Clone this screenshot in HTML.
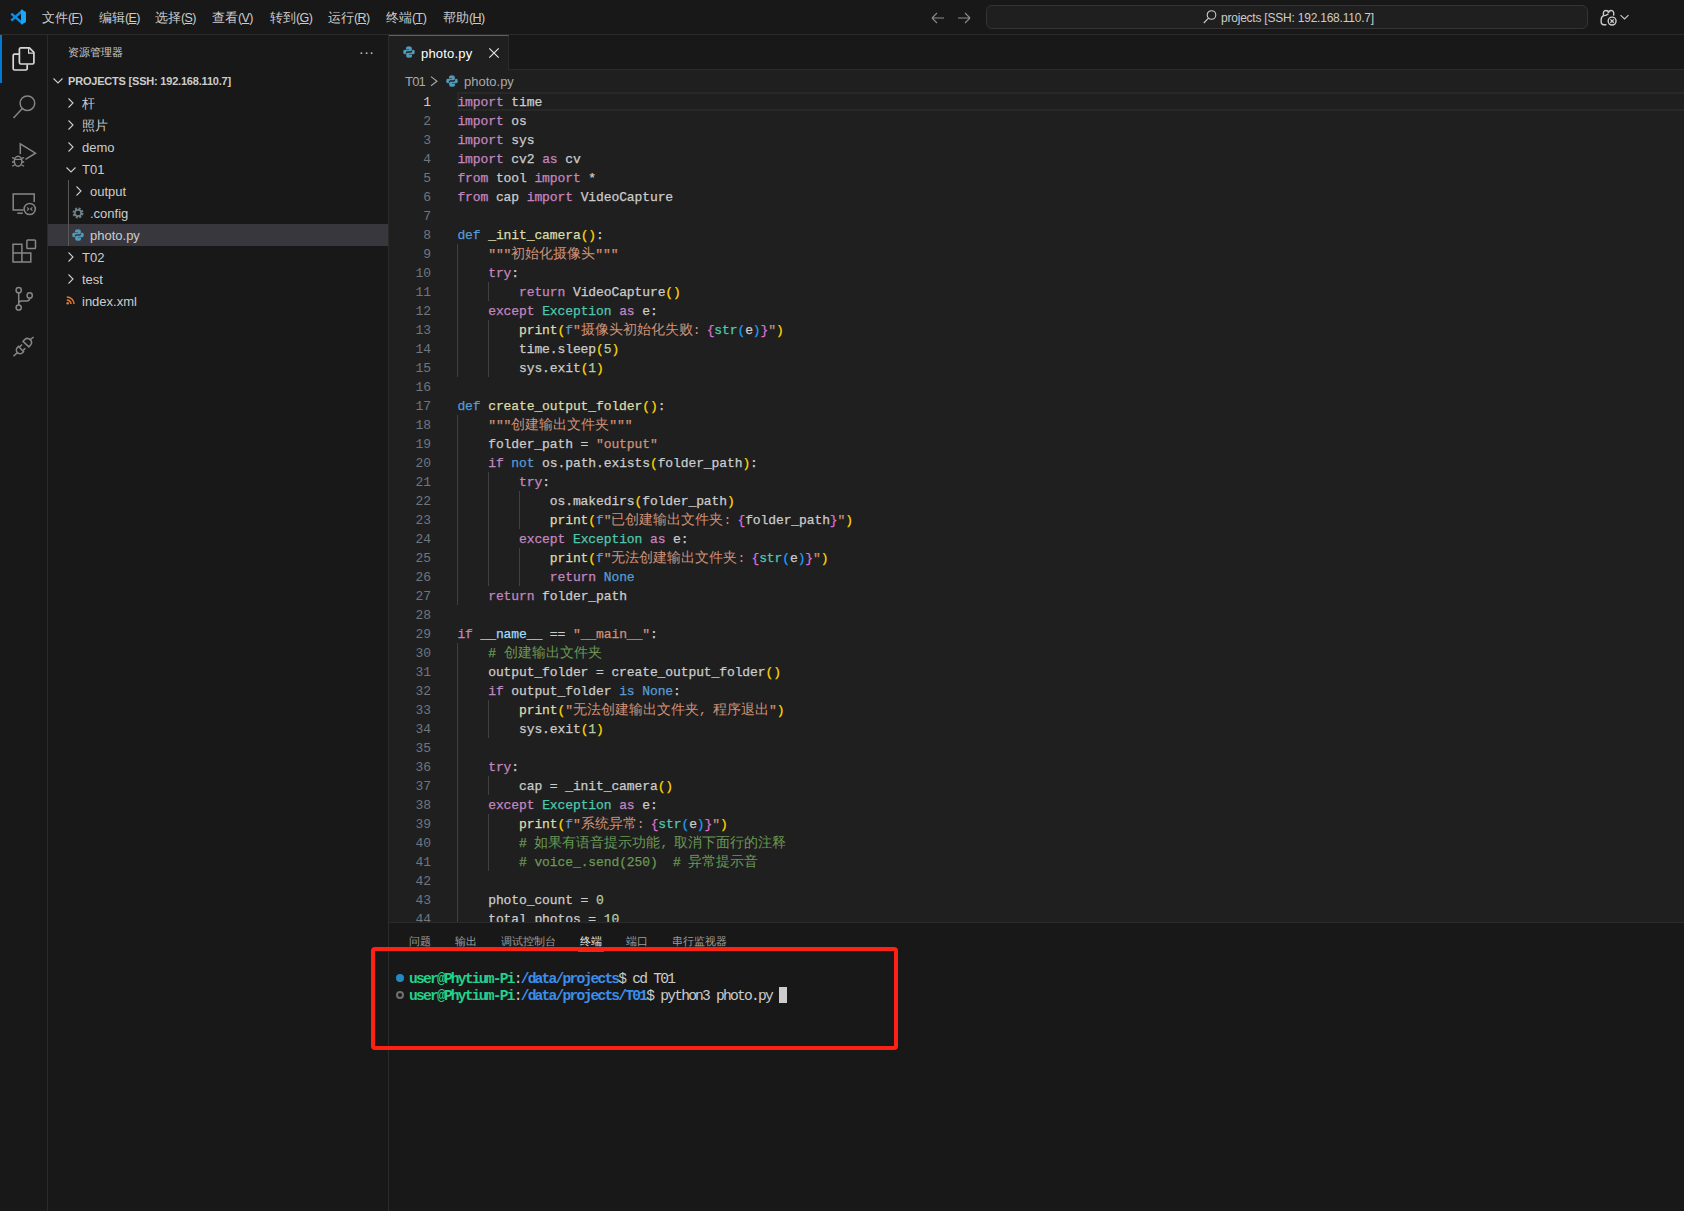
<!DOCTYPE html>
<html><head><meta charset="utf-8">
<style>
*{margin:0;padding:0;box-sizing:border-box}
html,body{width:1684px;height:1211px;overflow:hidden;background:#181818}
body{position:relative;font-family:"Liberation Sans",sans-serif;color:#cccccc}
.abs{position:absolute}
svg{position:absolute;overflow:visible}
/* title bar */
#title{left:0;top:0;width:1684px;height:35px;background:#181818;border-bottom:1px solid #2b2b2b}
.menu{position:absolute;top:9px;font-size:13px;line-height:17px;color:#cccccc;white-space:nowrap}
.mn{font-size:12.5px;letter-spacing:-0.6px}.mn u{text-decoration:underline;text-underline-offset:1px;text-decoration-thickness:1px}
#cc{left:986px;top:5px;width:602px;height:24px;background:#1f1f1f;border:1px solid #343434;border-radius:6px}
#cctext{left:1221px;top:10px;font-size:12px;line-height:16px;color:#cccccc;white-space:nowrap;letter-spacing:-0.22px}
/* activity bar */
#act{left:0;top:35px;width:48px;height:1176px;background:#181818;border-right:1px solid #2b2b2b}
#actind{left:0;top:35px;width:2px;height:48px;background:#0078d4}
/* sidebar */
#side{left:48px;top:35px;width:341px;height:1176px;background:#181818;border-right:1px solid #2b2b2b}
.st{position:absolute;margin-top:1px;font-size:13px;line-height:22px;color:#cccccc;white-space:nowrap}
.chev{position:absolute}
#sel{left:48px;top:224px;width:340px;height:22px;background:#37373d}
/* editor */
#editor{left:389px;top:35px;width:1295px;height:887px;background:#1f1f1f}
#tabs{left:389px;top:35px;width:1295px;height:35px;background:#181818;border-bottom:1px solid #2b2b2b}
#tab{left:389px;top:35px;width:120px;height:35px;background:#1f1f1f;border-top:1px solid #0078d4;border-right:1px solid #2b2b2b}
.ln{position:absolute;left:389px;width:42px;text-align:right;height:19px;line-height:19px;font-family:"Liberation Mono",monospace;font-size:13px;color:#6e7681;letter-spacing:-0.1px}
.cl{position:absolute;left:457.4px;height:19px;line-height:19px;font-family:"Liberation Mono",monospace;font-size:13px;letter-spacing:-0.1px;white-space:pre;color:#cccccc;-webkit-text-stroke:0.25px currentColor}
.cj{display:inline-block;font-style:normal;letter-spacing:0;-webkit-text-stroke:0;font-size:13.5px;overflow:hidden;white-space:nowrap;vertical-align:top;text-align:left}
.ig{position:absolute;width:1px;background:#404040}
.k{color:#c586c0}.b{color:#569cd6}.f{color:#dcdcaa}.s{color:#ce9178}.t{color:#4ec9b0}.n{color:#b5cea8}.c{color:#6a9955}.m{color:#9cdcfe}.y{color:#ffd700}.p{color:#da70d6}.q{color:#179fff}.w{color:#cccccc}
#curline{left:457px;top:92px;width:1227px;height:19px;border:2px solid #282828;border-right:none}
/* panel */
#panel{left:389px;top:922px;width:1295px;height:289px;background:#181818;border-top:1px solid #2b2b2b}
.pt{position:absolute;top:933px;font-size:11px;line-height:16px;color:#9d9d9d;white-space:nowrap}
.term{position:absolute;left:409px;height:17px;line-height:17px;font-family:"Liberation Mono",monospace;font-size:14.6px;letter-spacing:-1.78px;white-space:pre;color:#cccccc}
.tg{color:#23d18b;font-weight:bold}.tb{color:#3b8eea;font-weight:bold}
#redbox{left:371px;top:947px;width:527px;height:103px;border:4px solid #ff2114;border-radius:4px}
</style></head><body>

<!-- TITLE BAR -->
<div id="title" class="abs"></div>
<svg style="left:10px;top:9px" width="16" height="16" viewBox="0 0 16 16">
  <path d="M13 1.2 L1.3 11.6" stroke="#0a8fe4" stroke-width="2.5"/>
  <path d="M1.3 4.6 L13 14.8" stroke="#0a8fe4" stroke-width="2.5"/>
  <path d="M11 0.6 L15.2 2.5 Q16 2.9 16 3.8 V12.2 Q16 13.1 15.2 13.5 L11 15.4 Z" fill="#1aa6f4"/>
</svg>
<div class="menu" style="left:42px">文件<span class="mn">(<u>F</u>)</span></div>
<div class="menu" style="left:99px">编辑<span class="mn">(<u>E</u>)</span></div>
<div class="menu" style="left:155px">选择<span class="mn">(<u>S</u>)</span></div>
<div class="menu" style="left:212px">查看<span class="mn">(<u>V</u>)</span></div>
<div class="menu" style="left:270px">转到<span class="mn">(<u>G</u>)</span></div>
<div class="menu" style="left:328px">运行<span class="mn">(<u>R</u>)</span></div>
<div class="menu" style="left:386px">终端<span class="mn">(<u>T</u>)</span></div>
<div class="menu" style="left:443px">帮助<span class="mn">(<u>H</u>)</span></div>
<!-- nav arrows -->
<svg style="left:930px;top:10px" width="16" height="16" viewBox="0 0 16 16" fill="none" stroke="#8b8b8b" stroke-width="1.1">
  <path d="M2 8 H14 M2 8 L7 3 M2 8 L7 13"/>
</svg>
<svg style="left:956px;top:10px" width="16" height="16" viewBox="0 0 16 16" fill="none" stroke="#8b8b8b" stroke-width="1.1">
  <path d="M14 8 H2 M14 8 L9 3 M14 8 L9 13"/>
</svg>
<div id="cc" class="abs"></div>
<svg style="left:1202px;top:9px" width="16" height="16" viewBox="0 0 16 16" fill="none" stroke="#cccccc" stroke-width="1.1">
  <circle cx="9.5" cy="6" r="4.3"/><path d="M6.5 9.2 L1.8 14"/>
</svg>
<div id="cctext" class="abs">projects [SSH: 192.168.110.7]</div>
<!-- accounts icon -->
<svg style="left:1600px;top:9px" width="17" height="17" viewBox="0 0 16 16" fill="none" stroke="#cccccc" stroke-width="1.3">
  <path d="M3.4 6.2 Q2.4 1.4 5.6 1.4 Q8 1.4 8 3.8 Q8 1.4 10.4 1.4 Q13.6 1.4 12.8 6.2"/>
  <path d="M3.4 6.2 Q5.6 6.6 8 4.4 M3.4 6.2 Q1.1 7.2 1.1 10 V12.4 Q1.2 14.6 3.6 14.8 H6"/>
  <circle cx="11.4" cy="11.4" r="3.7"/><path d="M9.8 9.8 L13 13 M13 9.8 L9.8 13" stroke-width="1.2"/>
</svg>
<svg style="left:1619px;top:12px" width="11" height="10" viewBox="0 0 11 10" fill="none" stroke="#cccccc" stroke-width="1.1">
  <path d="M1.5 3.2 L5.5 7 L9.5 3.2"/>
</svg>

<!-- ACTIVITY BAR -->
<div id="act" class="abs"></div>
<div id="actind" class="abs"></div>
<!-- files -->
<svg style="left:12px;top:47px" width="24" height="24" viewBox="0 0 24 24" fill="none" stroke="#d7d7d7" stroke-width="1.7">
  <path d="M7.3 7.2 H2.6 Q1.2 7.2 1.2 8.6 V21.6 Q1.2 23 2.6 23 H13.8 Q15.2 23 15.2 21.6 V17.4"/>
  <path d="M8.8 0.9 H17.4 L21.9 5.4 V15.6 Q21.9 17 20.5 17 H8.8 Q7.4 17 7.4 15.6 V2.3 Q7.4 0.9 8.8 0.9 Z"/><path d="M16.6 1.2 V6.2 H21.6" stroke-width="1.2"/>
</svg>
<!-- search -->
<svg style="left:12px;top:95px" width="24" height="24" viewBox="0 0 24 24" fill="none" stroke="#868686" stroke-width="1.5">
  <circle cx="15.4" cy="8.2" r="7.3"/><path d="M10.3 13.6 L1.5 23"/>
</svg>
<!-- run & debug -->
<svg style="left:12px;top:143px" width="24" height="24" viewBox="0 0 24 24" fill="none" stroke="#868686" stroke-width="1.5">
  <path d="M8.3 11 V0.8 L23.5 10.2 L13.5 16.3"/>
  <ellipse cx="6.1" cy="18.3" rx="3.8" ry="5"/>
  <path d="M2.4 16.3 H9.8 M0 14.6 L2.4 15.4 M12.2 14.6 L9.8 15.4 M0 19 H2.3 M9.9 19 H12.2 M0.2 23.2 L2.8 21.8 M12 23.2 L9.4 21.8" stroke-width="1.3"/>
</svg>
<!-- remote explorer -->
<svg style="left:12px;top:191px" width="24" height="24" viewBox="0 0 24 24" fill="none" stroke="#868686" stroke-width="1.5">
  <path d="M11.5 19 H1.2 V3 H22.2 V11"/>
  <path d="M5.3 22.2 H10.8"/>
  <circle cx="17.7" cy="18" r="5.6"/>
  <path d="M15 16.3 L16.8 18 L15 19.7 M20.4 16.3 L18.6 18 L20.4 19.7" stroke-width="1.1"/>
</svg>
<!-- extensions -->
<svg style="left:12px;top:239px" width="24" height="24" viewBox="0 0 24 24" fill="none" stroke="#868686" stroke-width="1.5">
  <path d="M1 5.2 H9.9 V14.1 H18.8 V23 H1 Z M1 14.1 H9.9 V23"/>
  <rect x="14.9" y="1" width="8.6" height="8.6" rx="0.8"/>
</svg>
<!-- source control -->
<svg style="left:12px;top:287px" width="24" height="24" viewBox="0 0 24 24" fill="none" stroke="#868686" stroke-width="1.5">
  <circle cx="6.7" cy="3.2" r="2.6"/><circle cx="6.7" cy="20.5" r="2.6"/><circle cx="17.7" cy="8.4" r="2.6"/>
  <path d="M6.7 5.8 V17.9 M17.7 11 Q17.7 14 14.7 14 H9.5 Q6.7 14 6.7 16.5"/>
</svg>
<!-- plug -->
<svg style="left:12px;top:335px" width="24" height="24" viewBox="0 0 24 24" fill="none" stroke="#868686" stroke-width="1.5">
  <path d="M11 6.4 L16.9 11.9 L18.6 10.1 A4.05 4.05 0 0 0 12.7 4.6 Z M18.1 4.7 L21.7 2"/>
  <path d="M6.6 11.4 L11.6 16.7 L10.5 17.7 A3.6 3.6 0 0 1 5.5 12.4 Z M7.6 11.9 L10 9.4 M11.3 15.1 L13.4 13.2 M5.3 17.6 L1.5 21.2"/>
</svg>

<!-- SIDEBAR -->
<div id="side" class="abs"></div>
<div class="abs" style="left:68px;top:44px;font-size:11px;line-height:16px;color:#cccccc">资源管理器</div>
<div class="abs" style="left:359px;top:44px;font-size:14px;line-height:16px;color:#cccccc;letter-spacing:0.5px">···</div>
<svg style="left:52px;top:75px" width="12" height="12" viewBox="0 0 12 12" fill="none" stroke="#cccccc" stroke-width="1.1"><path d="M1.5 3.5 L6 8 L10.5 3.5"/></svg>
<div class="abs" style="left:68px;top:73px;font-size:11px;line-height:16px;font-weight:bold;color:#cccccc;white-space:nowrap;letter-spacing:-0.2px">PROJECTS [SSH: 192.168.110.7]</div>
<div id="sel" class="abs"></div>
<!-- tree indent guide -->
<div class="abs" style="left:68px;top:180px;width:1px;height:66px;background:#585858"></div>
<svg style="left:67px;top:97px" width="8" height="12" viewBox="0 0 8 12" fill="none" stroke="#cccccc" stroke-width="1.1"><path d="M1.5 1.5 L6 6 L1.5 10.5"/></svg>
<div class="st" style="left:82px;top:92px">杆</div>
<svg style="left:67px;top:119px" width="8" height="12" viewBox="0 0 8 12" fill="none" stroke="#cccccc" stroke-width="1.1"><path d="M1.5 1.5 L6 6 L1.5 10.5"/></svg>
<div class="st" style="left:82px;top:114px">照片</div>
<svg style="left:67px;top:141px" width="8" height="12" viewBox="0 0 8 12" fill="none" stroke="#cccccc" stroke-width="1.1"><path d="M1.5 1.5 L6 6 L1.5 10.5"/></svg>
<div class="st" style="left:82px;top:136px">demo</div>
<svg style="left:65px;top:166px" width="12" height="8" viewBox="0 0 12 8" fill="none" stroke="#cccccc" stroke-width="1.1"><path d="M1.5 1.5 L6 6 L10.5 1.5"/></svg>
<div class="st" style="left:82px;top:158px">T01</div>
<svg style="left:75px;top:185px" width="8" height="12" viewBox="0 0 8 12" fill="none" stroke="#cccccc" stroke-width="1.1"><path d="M1.5 1.5 L6 6 L1.5 10.5"/></svg>
<div class="st" style="left:90px;top:180px">output</div>
<svg style="left:72px;top:207px" width="12" height="12" viewBox="0 0 12 12"><circle cx="6" cy="6" r="4.2" fill="none" stroke="#6d8086" stroke-width="2.6" stroke-dasharray="1.9 1.4"/><circle cx="6" cy="6" r="3.2" fill="none" stroke="#6d8086" stroke-width="1.8"/></svg>
<div class="st" style="left:90px;top:202px">.config</div>
<svg style="left:72px;top:229px" width="12" height="12" viewBox="0 0 12 12"><path d="M5.9 0.3 Q3 0.3 3 1.8 V3.2 H6.1 V3.7 H1.8 Q0.2 3.7 0.2 6 Q0.2 8.3 1.8 8.3 H2.8 V6.9 Q2.8 5.3 4.4 5.3 H7.4 Q8.8 5.3 8.8 4 V1.8 Q8.8 0.3 5.9 0.3 Z" fill="#519aba"/><path d="M6.1 11.7 Q9 11.7 9 10.2 V8.8 H5.9 V8.3 H10.2 Q11.8 8.3 11.8 6 Q11.8 3.7 10.2 3.7 H9.2 V5.1 Q9.2 6.7 7.6 6.7 H4.6 Q3.2 6.7 3.2 8 V10.2 Q3.2 11.7 6.1 11.7 Z" fill="#519aba"/></svg>
<div class="st" style="left:90px;top:224px">photo.py</div>
<svg style="left:67px;top:251px" width="8" height="12" viewBox="0 0 8 12" fill="none" stroke="#cccccc" stroke-width="1.1"><path d="M1.5 1.5 L6 6 L1.5 10.5"/></svg>
<div class="st" style="left:82px;top:246px">T02</div>
<svg style="left:67px;top:273px" width="8" height="12" viewBox="0 0 8 12" fill="none" stroke="#cccccc" stroke-width="1.1"><path d="M1.5 1.5 L6 6 L1.5 10.5"/></svg>
<div class="st" style="left:82px;top:268px">test</div>
<svg style="left:66px;top:296px" width="10" height="9" viewBox="0 0 10 9" fill="none" stroke="#e37933" stroke-width="1.5"><circle cx="1.7" cy="7.3" r="1.3" fill="#e37933" stroke="none"/><path d="M0.8 3.9 A4.2 4.2 0 0 1 5 8.1 M0.8 0.9 A7.2 7.2 0 0 1 8 8.1"/></svg>
<div class="st" style="left:82px;top:290px">index.xml</div>

<!-- EDITOR -->
<div id="editor" class="abs"></div>
<div id="tabs" class="abs"></div>
<div id="tab" class="abs"></div>
<svg style="left:403px;top:46px" width="12" height="12" viewBox="0 0 12 12">
  <path d="M5.9 0.3 Q3 0.3 3 1.8 V3.2 H6.1 V3.7 H1.8 Q0.2 3.7 0.2 6 Q0.2 8.3 1.8 8.3 H2.8 V6.9 Q2.8 5.3 4.4 5.3 H7.4 Q8.8 5.3 8.8 4 V1.8 Q8.8 0.3 5.9 0.3 Z" fill="#519aba"/>
  <path d="M6.1 11.7 Q9 11.7 9 10.2 V8.8 H5.9 V8.3 H10.2 Q11.8 8.3 11.8 6 Q11.8 3.7 10.2 3.7 H9.2 V5.1 Q9.2 6.7 7.6 6.7 H4.6 Q3.2 6.7 3.2 8 V10.2 Q3.2 11.7 6.1 11.7 Z" fill="#519aba"/>
</svg>
<div class="abs" style="left:421px;top:45px;font-size:13px;line-height:17px;color:#ffffff;letter-spacing:0.2px">photo.py</div>
<svg style="left:488px;top:47px" width="12" height="12" viewBox="0 0 12 12" fill="none" stroke="#e8e8e8" stroke-width="1.15"><path d="M1.3 1.3 L10.7 10.7 M10.7 1.3 L1.3 10.7"/></svg>
<!-- breadcrumbs -->
<div class="abs" style="left:405px;top:73px;font-size:13px;line-height:17px;color:#a9a9a9;letter-spacing:-0.8px">T01</div>
<svg style="left:429px;top:75px" width="10" height="12" viewBox="0 0 10 12" fill="none" stroke="#a9a9a9" stroke-width="1.1"><path d="M2 1.6 L8 6.2 L2 10.8"/></svg>
<svg style="left:446px;top:75px" width="12" height="12" viewBox="0 0 12 12">
  <path d="M5.9 0.3 Q3 0.3 3 1.8 V3.2 H6.1 V3.7 H1.8 Q0.2 3.7 0.2 6 Q0.2 8.3 1.8 8.3 H2.8 V6.9 Q2.8 5.3 4.4 5.3 H7.4 Q8.8 5.3 8.8 4 V1.8 Q8.8 0.3 5.9 0.3 Z" fill="#519aba"/>
  <path d="M6.1 11.7 Q9 11.7 9 10.2 V8.8 H5.9 V8.3 H10.2 Q11.8 8.3 11.8 6 Q11.8 3.7 10.2 3.7 H9.2 V5.1 Q9.2 6.7 7.6 6.7 H4.6 Q3.2 6.7 3.2 8 V10.2 Q3.2 11.7 6.1 11.7 Z" fill="#519aba"/>
</svg>
<div class="abs" style="left:464px;top:73px;font-size:13px;line-height:17px;color:#a9a9a9">photo.py</div>
<div id="curline" class="abs"></div>
<div class="abs" style="left:389px;top:92px;width:1295px;height:830px;overflow:hidden">
<div style="position:absolute;left:-389px;top:-92px;width:1684px;height:1211px">
<div class="ig" style="left:457.4px;top:244px;height:133px"></div>
<div class="ig" style="left:488.2px;top:282px;height:19px"></div>
<div class="ig" style="left:488.2px;top:320px;height:57px"></div>
<div class="ig" style="left:457.4px;top:415px;height:190px"></div>
<div class="ig" style="left:488.2px;top:472px;height:114px"></div>
<div class="ig" style="left:519.0px;top:491px;height:38px"></div>
<div class="ig" style="left:519.0px;top:548px;height:38px"></div>
<div class="ig" style="left:457.4px;top:643px;height:285px"></div>
<div class="ig" style="left:488.2px;top:700px;height:38px"></div>
<div class="ig" style="left:488.2px;top:776px;height:19px"></div>
<div class="ig" style="left:488.2px;top:814px;height:57px"></div>
<div class="ln" style="top:93px;color:#cccccc">1</div><div class="cl" style="top:93px"><span class="k">import</span><span class="w"> time</span></div>
<div class="ln" style="top:112px">2</div><div class="cl" style="top:112px"><span class="k">import</span><span class="w"> os</span></div>
<div class="ln" style="top:131px">3</div><div class="cl" style="top:131px"><span class="k">import</span><span class="w"> sys</span></div>
<div class="ln" style="top:150px">4</div><div class="cl" style="top:150px"><span class="k">import</span><span class="w"> cv2 </span><span class="k">as</span><span class="w"> cv</span></div>
<div class="ln" style="top:169px">5</div><div class="cl" style="top:169px"><span class="k">from</span><span class="w"> tool </span><span class="k">import</span><span class="w"> *</span></div>
<div class="ln" style="top:188px">6</div><div class="cl" style="top:188px"><span class="k">from</span><span class="w"> cap </span><span class="k">import</span><span class="w"> VideoCapture</span></div>
<div class="ln" style="top:207px">7</div><div class="cl" style="top:207px"></div>
<div class="ln" style="top:226px">8</div><div class="cl" style="top:226px"><span class="b">def</span><span class="w"> </span><span class="f">_init_camera</span><span class="y">()</span><span class="w">:</span></div>
<div class="ln" style="top:245px">9</div><div class="cl" style="top:245px"><span class="w">    </span><span class="s">&quot;&quot;&quot;<i class="cj" style="width:84px">初始化摄像头</i>&quot;&quot;&quot;</span></div>
<div class="ln" style="top:264px">10</div><div class="cl" style="top:264px"><span class="w">    </span><span class="k">try</span><span class="w">:</span></div>
<div class="ln" style="top:283px">11</div><div class="cl" style="top:283px"><span class="w">        </span><span class="k">return</span><span class="w"> VideoCapture</span><span class="y">()</span></div>
<div class="ln" style="top:302px">12</div><div class="cl" style="top:302px"><span class="w">    </span><span class="k">except</span><span class="w"> </span><span class="t">Exception</span><span class="w"> </span><span class="k">as</span><span class="w"> e:</span></div>
<div class="ln" style="top:321px">13</div><div class="cl" style="top:321px"><span class="w">        </span><span class="f">print</span><span class="y">(</span><span class="b">f</span><span class="s">&quot;<i class="cj" style="width:112px">摄像头初始化失败</i><i class="cj" style="width:14px;font-family:&quot;Liberation Mono&quot;,monospace;font-size:13px">:</i></span><span class="p">{</span><span class="t">str</span><span class="q">(</span><span class="w">e</span><span class="q">)</span><span class="p">}</span><span class="s">&quot;</span><span class="y">)</span></div>
<div class="ln" style="top:340px">14</div><div class="cl" style="top:340px"><span class="w">        time.sleep</span><span class="y">(</span><span class="n">5</span><span class="y">)</span></div>
<div class="ln" style="top:359px">15</div><div class="cl" style="top:359px"><span class="w">        sys.exit</span><span class="y">(</span><span class="n">1</span><span class="y">)</span></div>
<div class="ln" style="top:378px">16</div><div class="cl" style="top:378px"></div>
<div class="ln" style="top:397px">17</div><div class="cl" style="top:397px"><span class="b">def</span><span class="w"> </span><span class="f">create_output_folder</span><span class="y">()</span><span class="w">:</span></div>
<div class="ln" style="top:416px">18</div><div class="cl" style="top:416px"><span class="w">    </span><span class="s">&quot;&quot;&quot;<i class="cj" style="width:98px">创建输出文件夹</i>&quot;&quot;&quot;</span></div>
<div class="ln" style="top:435px">19</div><div class="cl" style="top:435px"><span class="w">    folder_path = </span><span class="s">&quot;output&quot;</span></div>
<div class="ln" style="top:454px">20</div><div class="cl" style="top:454px"><span class="w">    </span><span class="k">if</span><span class="w"> </span><span class="b">not</span><span class="w"> os.path.exists</span><span class="y">(</span><span class="w">folder_path</span><span class="y">)</span><span class="w">:</span></div>
<div class="ln" style="top:473px">21</div><div class="cl" style="top:473px"><span class="w">        </span><span class="k">try</span><span class="w">:</span></div>
<div class="ln" style="top:492px">22</div><div class="cl" style="top:492px"><span class="w">            os.makedirs</span><span class="y">(</span><span class="w">folder_path</span><span class="y">)</span></div>
<div class="ln" style="top:511px">23</div><div class="cl" style="top:511px"><span class="w">            </span><span class="f">print</span><span class="y">(</span><span class="b">f</span><span class="s">&quot;<i class="cj" style="width:112px">已创建输出文件夹</i><i class="cj" style="width:14px;font-family:&quot;Liberation Mono&quot;,monospace;font-size:13px">:</i></span><span class="p">{</span><span class="w">folder_path</span><span class="p">}</span><span class="s">&quot;</span><span class="y">)</span></div>
<div class="ln" style="top:530px">24</div><div class="cl" style="top:530px"><span class="w">        </span><span class="k">except</span><span class="w"> </span><span class="t">Exception</span><span class="w"> </span><span class="k">as</span><span class="w"> e:</span></div>
<div class="ln" style="top:549px">25</div><div class="cl" style="top:549px"><span class="w">            </span><span class="f">print</span><span class="y">(</span><span class="b">f</span><span class="s">&quot;<i class="cj" style="width:126px">无法创建输出文件夹</i><i class="cj" style="width:14px;font-family:&quot;Liberation Mono&quot;,monospace;font-size:13px">:</i></span><span class="p">{</span><span class="t">str</span><span class="q">(</span><span class="w">e</span><span class="q">)</span><span class="p">}</span><span class="s">&quot;</span><span class="y">)</span></div>
<div class="ln" style="top:568px">26</div><div class="cl" style="top:568px"><span class="w">            </span><span class="k">return</span><span class="w"> </span><span class="b">None</span></div>
<div class="ln" style="top:587px">27</div><div class="cl" style="top:587px"><span class="w">    </span><span class="k">return</span><span class="w"> folder_path</span></div>
<div class="ln" style="top:606px">28</div><div class="cl" style="top:606px"></div>
<div class="ln" style="top:625px">29</div><div class="cl" style="top:625px"><span class="k">if</span><span class="w"> </span><span class="m">__name__</span><span class="w"> == </span><span class="s">&quot;__main__&quot;</span><span class="w">:</span></div>
<div class="ln" style="top:644px">30</div><div class="cl" style="top:644px"><span class="w">    </span><span class="c"># <i class="cj" style="width:98px">创建输出文件夹</i></span></div>
<div class="ln" style="top:663px">31</div><div class="cl" style="top:663px"><span class="w">    output_folder = create_output_folder</span><span class="y">()</span></div>
<div class="ln" style="top:682px">32</div><div class="cl" style="top:682px"><span class="w">    </span><span class="k">if</span><span class="w"> output_folder </span><span class="b">is</span><span class="w"> </span><span class="b">None</span><span class="w">:</span></div>
<div class="ln" style="top:701px">33</div><div class="cl" style="top:701px"><span class="w">        </span><span class="f">print</span><span class="y">(</span><span class="s">&quot;<i class="cj" style="width:126px">无法创建输出文件夹</i><i class="cj" style="width:14px;font-family:&quot;Liberation Mono&quot;,monospace;font-size:13px">,</i><i class="cj" style="width:56px">程序退出</i>&quot;</span><span class="y">)</span></div>
<div class="ln" style="top:720px">34</div><div class="cl" style="top:720px"><span class="w">        sys.exit</span><span class="y">(</span><span class="n">1</span><span class="y">)</span></div>
<div class="ln" style="top:739px">35</div><div class="cl" style="top:739px"></div>
<div class="ln" style="top:758px">36</div><div class="cl" style="top:758px"><span class="w">    </span><span class="k">try</span><span class="w">:</span></div>
<div class="ln" style="top:777px">37</div><div class="cl" style="top:777px"><span class="w">        cap = _init_camera</span><span class="y">()</span></div>
<div class="ln" style="top:796px">38</div><div class="cl" style="top:796px"><span class="w">    </span><span class="k">except</span><span class="w"> </span><span class="t">Exception</span><span class="w"> </span><span class="k">as</span><span class="w"> e:</span></div>
<div class="ln" style="top:815px">39</div><div class="cl" style="top:815px"><span class="w">        </span><span class="f">print</span><span class="y">(</span><span class="b">f</span><span class="s">&quot;<i class="cj" style="width:56px">系统异常</i><i class="cj" style="width:14px;font-family:&quot;Liberation Mono&quot;,monospace;font-size:13px">:</i></span><span class="p">{</span><span class="t">str</span><span class="q">(</span><span class="w">e</span><span class="q">)</span><span class="p">}</span><span class="s">&quot;</span><span class="y">)</span></div>
<div class="ln" style="top:834px">40</div><div class="cl" style="top:834px"><span class="w">        </span><span class="c"># <i class="cj" style="width:126px">如果有语音提示功能</i><i class="cj" style="width:14px;font-family:&quot;Liberation Mono&quot;,monospace;font-size:13px">,</i><i class="cj" style="width:112px">取消下面行的注释</i></span></div>
<div class="ln" style="top:853px">41</div><div class="cl" style="top:853px"><span class="w">        </span><span class="c"># voice_.send(250)  # <i class="cj" style="width:70px">异常提示音</i></span></div>
<div class="ln" style="top:872px">42</div><div class="cl" style="top:872px"></div>
<div class="ln" style="top:891px">43</div><div class="cl" style="top:891px"><span class="w">    photo_count = </span><span class="n">0</span></div>
<div class="ln" style="top:910px">44</div><div class="cl" style="top:910px"><span class="w">    total_photos = </span><span class="n">10</span></div>
</div></div>

<!-- PANEL -->
<div id="panel" class="abs"></div>
<div class="pt" style="left:409px">问题</div>
<div class="pt" style="left:455px">输出</div>
<div class="pt" style="left:501px">调试控制台</div>
<div class="pt" style="left:580px;color:#e7e7e7">终端</div>
<div class="pt" style="left:626px">端口</div>
<div class="pt" style="left:672px">串行监视器</div>
<div class="abs" style="left:578px;top:951px;width:26px;height:1px;background:#0078d4"></div>
<div class="abs" style="left:396px;top:974px;width:8px;height:8px;border-radius:50%;background:#2388c4"></div>
<div class="abs" style="left:396px;top:991px;width:8px;height:8px;border-radius:50%;border:2px solid #707070"></div>
<div class="term" style="top:971px"><span class="tg">user@Phytium-Pi</span>:<span class="tb">/data/projects</span>$ cd T01</div>
<div class="term" style="top:988px"><span class="tg">user@Phytium-Pi</span>:<span class="tb">/data/projects/T01</span>$ python3 photo.py </div>
<div class="abs" style="left:779px;top:987px;width:8px;height:16px;background:#cccccc"></div>
<div id="redbox" class="abs"></div>
</body></html>
